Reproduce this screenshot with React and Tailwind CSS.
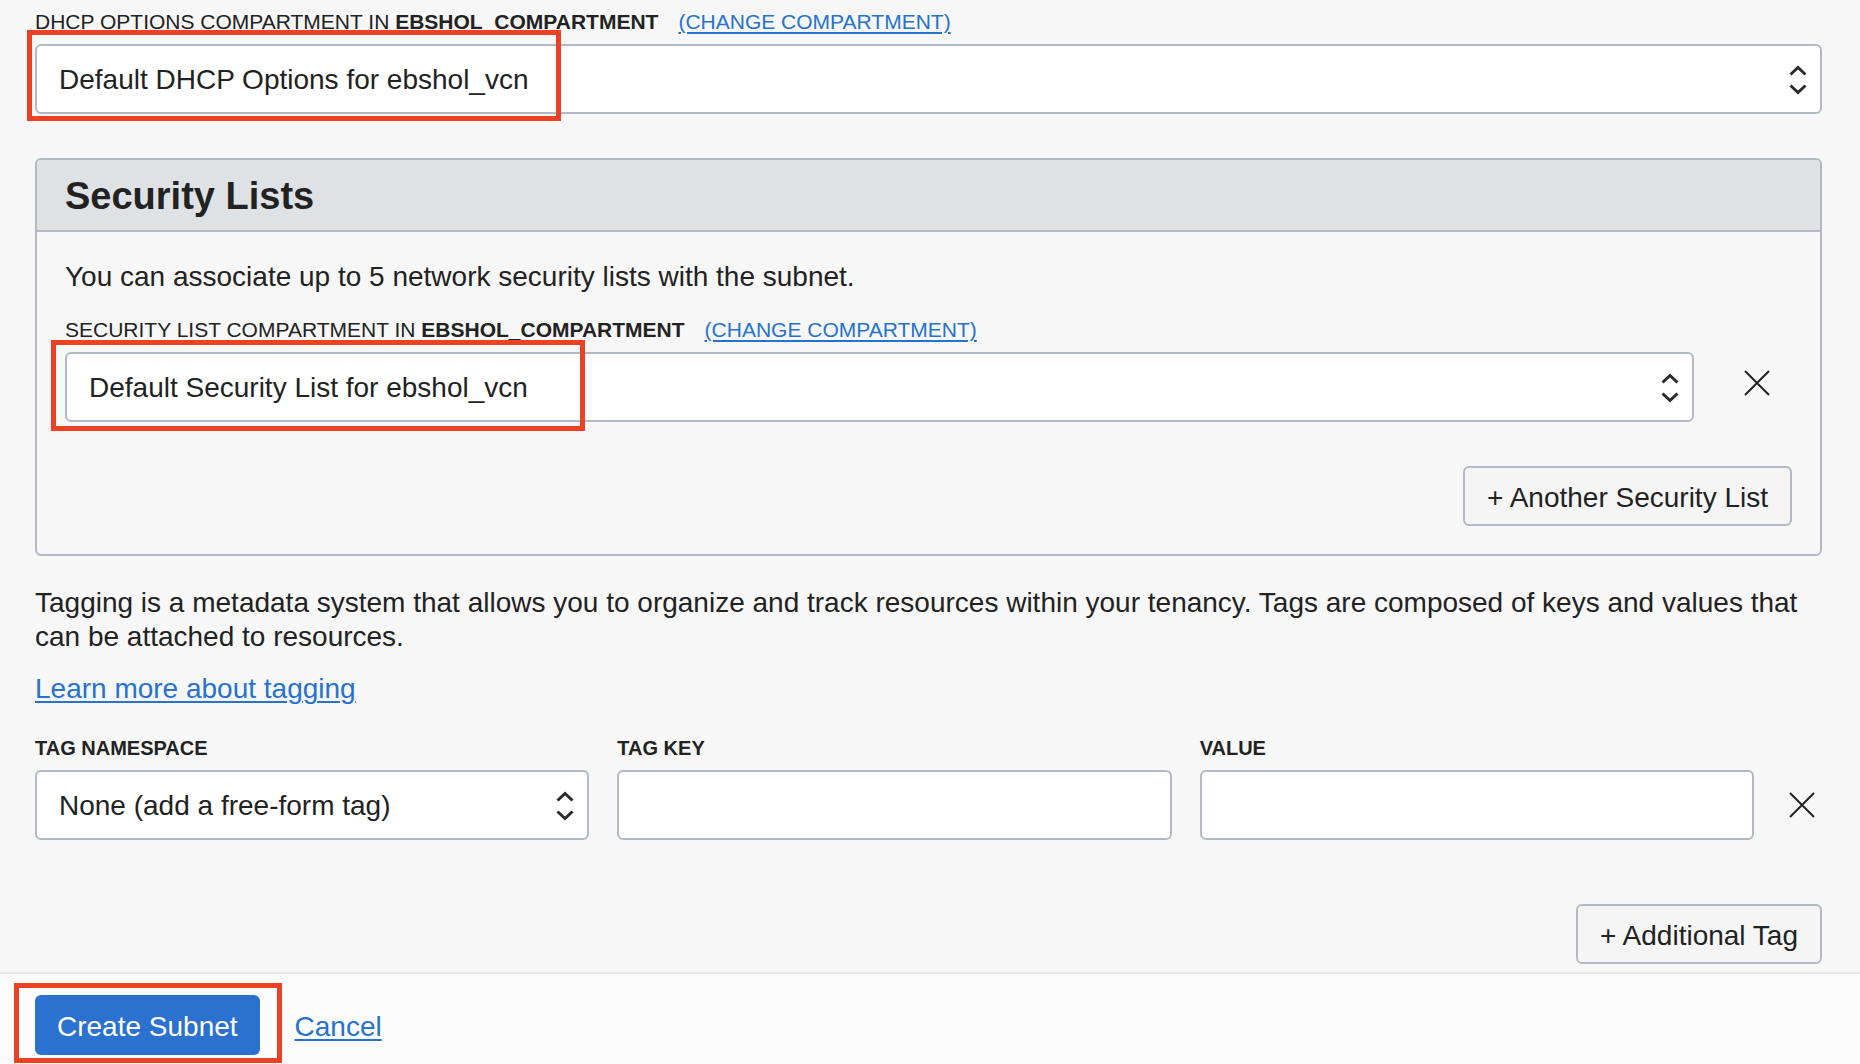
import React from "react";

const control =
  "block h-[70px] w-full rounded-md border-2 border-[#b3b9c4] bg-white px-[22px] pt-0.5 text-[28px] leading-[34px] text-[#222222] outline-none";

const secondaryButton =
  "h-[60px] rounded-md border-2 border-[#b3b9c4] bg-[#f5f5f5] px-[22px] pt-1 text-[28px] leading-[34px] text-[#222222]";

const link = "text-[#2672ce] underline decoration-2 underline-offset-3";

function Highlight({ className }) {
  return (
    <div
      aria-hidden="true"
      className={`pointer-events-none absolute border-5 border-[#ec4124] ${className}`}
    />
  );
}

function Select({ id, option }) {
  return (
    <div className="relative">
      <select id={id} className={`${control} appearance-none`}>
        <option>{option}</option>
      </select>
      <svg
        viewBox="0 0 18 32"
        className="pointer-events-none absolute top-5 right-[15px] h-8 w-[18px]"
        fill="none"
        stroke="#2b2b2b"
        strokeWidth="3"
      >
        <path d="M1.500 10.500 9 3.500l7.500 7" />
        <path d="M1.500 21.500 9 28.500l7.500-7" />
      </svg>
    </div>
  );
}

function CompartmentLabel({ htmlFor, children }) {
  return (
    <div className="mb-2.5 flex gap-5 text-[21px] leading-6 font-medium">
      <label htmlFor={htmlFor}>
        {children} COMPARTMENT IN <b>EBSHOL_COMPARTMENT</b>
      </label>
      <a href="#compartment" className={link}>
        (CHANGE COMPARTMENT)
      </a>
    </div>
  );
}

function Field({ id, label, children }) {
  return (
    <div>
      <label htmlFor={id} className="mb-2.5 block text-[20px] leading-6 font-bold">
        {label}
      </label>
      {children}
    </div>
  );
}

function RemoveButton({ label, className }) {
  return (
    <button
      type="button"
      aria-label={label}
      className={`flex items-center justify-center ${className}`}
    >
      <svg viewBox="0 0 26 26" className="size-[26px]" fill="none" stroke="#222222" strokeWidth="2">
        <path d="M1 1l24 24M25 1 1 25" />
      </svg>
    </button>
  );
}

export default function App() {
  return (
    <form
      className="flex min-h-screen flex-col bg-[#f7f7f7] font-['Liberation_Sans',Arial,sans-serif] text-[#222222]"
      onSubmit={(event) => event.preventDefault()}
    >
      <main className="px-[35px] pt-2.5 pr-[38px] pb-2 text-[28px] leading-[34px]">
        <CompartmentLabel htmlFor="dhcp">DHCP OPTIONS</CompartmentLabel>
        <div className="relative">
          <Select id="dhcp" option="Default DHCP Options for ebshol_vcn" />
          <Highlight className="-top-3.5 -left-2 h-[91px] w-[534px]" />
        </div>

        <section className="mt-11 rounded-md border-2 border-[#b3b9c4]">
          <h2 className="flex h-[72px] items-center rounded-t-sm border-b-2 border-[#b3bac1] bg-[#dee2e5] px-7 pt-0.5 text-[38px] leading-[48px] font-bold">
            Security Lists
          </h2>
          <div className="p-7">
            <p className="mb-6">You can associate up to 5 network security lists with the subnet.</p>
            <CompartmentLabel htmlFor="security">SECURITY LIST</CompartmentLabel>
            <div className="flex gap-7">
              <div className="relative grow">
                <Select id="security" option="Default Security List for ebshol_vcn" />
                <Highlight className="-top-3 -left-3.5 h-[91px] w-[534px]" />
              </div>
              <RemoveButton label="Remove security list" className="h-[62px] w-[70px]" />
            </div>
            <div className="mt-11 flex justify-end">
              <button type="button" className={secondaryButton}>
                + Another Security List
              </button>
            </div>
          </div>
        </section>

        <p className="mt-[30px]">
          Tagging is a metadata system that allows you to organize and track resources within your
          tenancy. Tags are composed of keys and values that can be attached to resources.
        </p>
        <p className="mt-[18px]">
          <a href="#tagging" className={link}>
            Learn more about tagging
          </a>
        </p>

        <div className="mt-[30px] grid grid-cols-[1fr_1fr_1fr_40px] items-end gap-7">
          <Field id="namespace" label="TAG NAMESPACE">
            <Select id="namespace" option="None (add a free-form tag)" />
          </Field>
          <Field id="key" label="TAG KEY">
            <input id="key" type="text" className={control} />
          </Field>
          <Field id="value" label="VALUE">
            <input id="value" type="text" className={control} />
          </Field>
          <RemoveButton label="Remove tag" className="h-[70px] w-10" />
        </div>
        <div className="mt-16 flex justify-end">
          <button type="button" className={secondaryButton}>
            + Additional Tag
          </button>
        </div>
      </main>

      <footer className="flex grow items-start gap-[35px] border-t-2 border-[#e6e6e6] bg-[#fcfcfc] px-[35px] pt-[21px] text-[28px] leading-[34px]">
        <div className="relative">
          <button
            type="submit"
            className="h-[60px] rounded-md bg-[#2a71d0] px-[22px] pt-1 text-white"
          >
            Create Subnet
          </button>
          <Highlight className="-top-3 -left-[21px] h-[80px] w-[268px]" />
        </div>
        <a href="#cancel" className={`${link} pt-[15px]`}>
          Cancel
        </a>
      </footer>
    </form>
  );
}
